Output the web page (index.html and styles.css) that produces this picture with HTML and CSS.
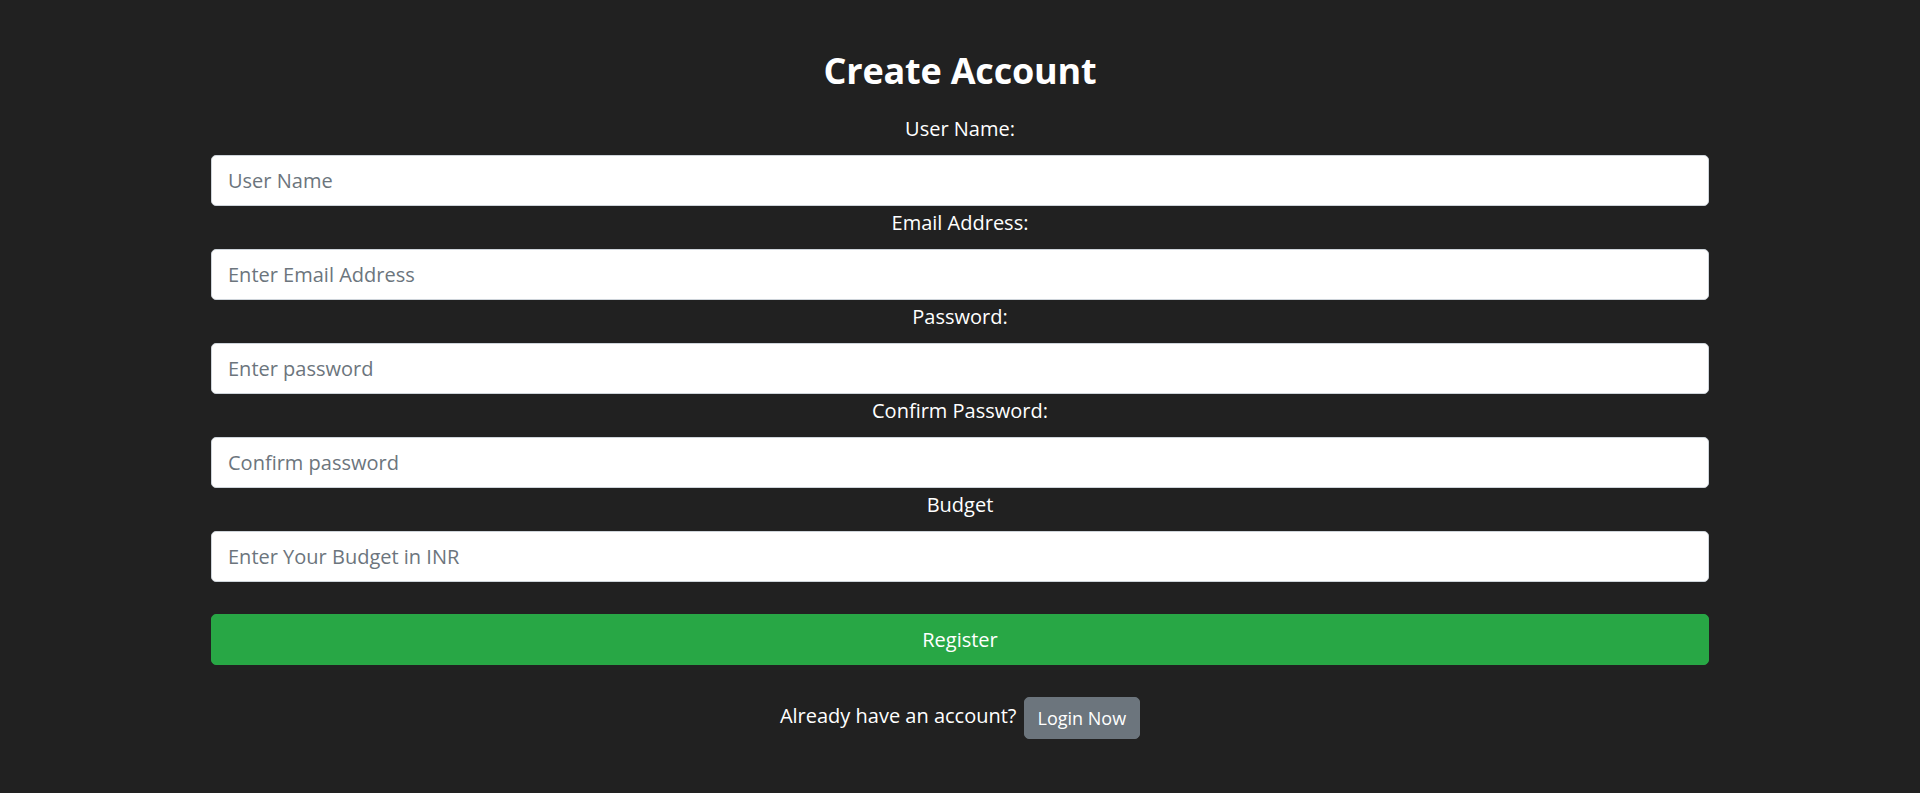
FILE: index.html
```html
<!DOCTYPE html>
<html lang="en">
<head>
<meta charset="utf-8">
<title>Create Account</title>
<link rel="stylesheet" href="styles.css">
</head>
<body>
<main class="page">
  <h1 class="title">Create Account</h1>
  <form class="form">
    <label class="label" for="user">User Name:</label>
    <input class="field" id="user" type="text" placeholder="User Name">
    <label class="label" for="email">Email Address:</label>
    <input class="field" id="email" type="email" placeholder="Enter Email Address">
    <label class="label" for="pass">Password:</label>
    <input class="field" id="pass" type="password" placeholder="Enter password">
    <label class="label" for="cpass">Confirm Password:</label>
    <input class="field" id="cpass" type="password" placeholder="Confirm password">
    <label class="label" for="budget">Budget</label>
    <input class="field" id="budget" type="text" placeholder="Enter Your Budget in INR">
    <button class="btn-register" type="button">Register</button>
  </form>
  <div class="login-row">
    <span class="login-text">Already have an account?</span>
    <button class="btn-login" type="button">Login Now</button>
  </div>
</main>
</body>
</html>
```

FILE: styles.css
```css
html, body {
  margin: 0;
  padding: 0;
  background: #212121;
}

body {
  font-family: "Open Sans", "Noto Sans", sans-serif;
  color: #ffffff;
  min-height: 793px;
}

.page {
  width: 1498px;
  margin: 0 auto;
  padding-top: 48px;
  display: flex;
  flex-direction: column;
}

.title {
  margin: 0 0 18px 0;
  font-size: 36px;
  line-height: 46px;
  font-weight: 700;
  letter-spacing: -0.2px;
  text-align: center;
}

.form {
  display: flex;
  flex-direction: column;
}

.label {
  display: block;
  font-size: 20px;
  line-height: 30px;
  padding: 2px 0 11px 0;
  text-align: center;
}

.field {
  box-sizing: border-box;
  height: 51px;
  width: 100%;
  margin: 0;
  padding: 0 16px;
  font-family: "Open Sans", "Noto Sans", sans-serif;
  font-size: 20px;
  color: #495057;
  background: #ffffff;
  border: 1px solid #ced4da;
  border-radius: 5px;
  outline: none;
}

.field::placeholder {
  color: #6c757d;
  opacity: 1;
}

.btn-register {
  box-sizing: border-box;
  margin-top: 32px;
  height: 51px;
  width: 100%;
  font-family: "Open Sans", "Noto Sans", sans-serif;
  font-size: 20px;
  color: #ffffff;
  background: #28a745;
  border: 1px solid #28a745;
  border-radius: 5px;
}

.login-row {
  margin-top: 32px;
  display: flex;
  justify-content: center;
  align-items: flex-start;
  gap: 7px;
}

.login-text {
  font-size: 20px;
  line-height: 30px;
  margin-top: 4px;
}

.btn-login {
  box-sizing: border-box;
  height: 42px;
  padding: 0 13px;
  font-family: "Open Sans", "Noto Sans", sans-serif;
  font-size: 18px;
  line-height: 26px;
  color: #ffffff;
  background: #6c757d;
  border: 1px solid #6c757d;
  border-radius: 5px;
}
```
